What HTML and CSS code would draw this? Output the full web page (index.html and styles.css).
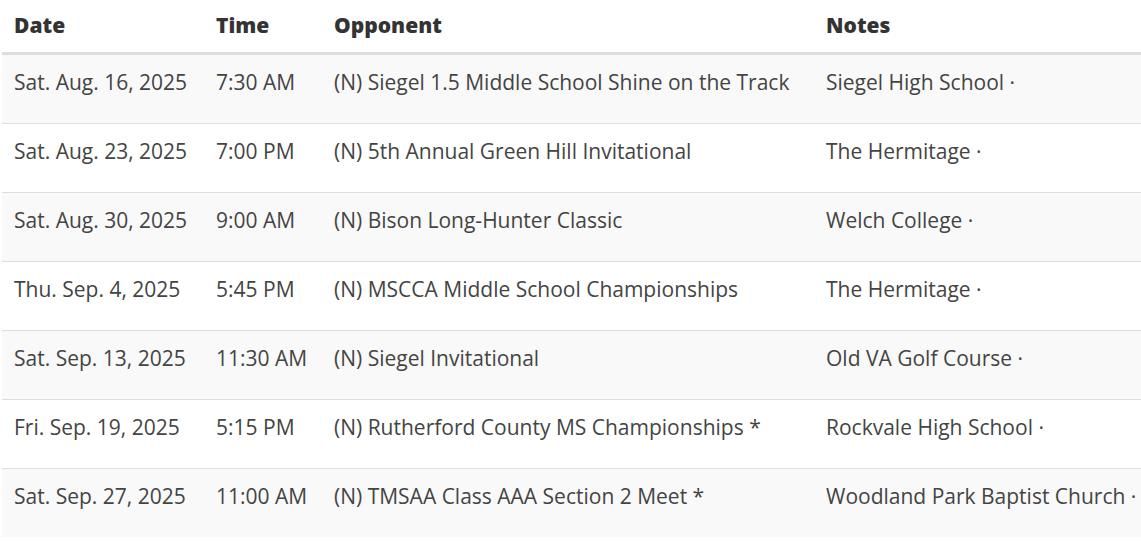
FILE: index.html
```html
<!DOCTYPE html>
<html>
<head>
<meta charset="utf-8">
<link rel="stylesheet" href="styles.css">
</head>
<body>
<table class="schedule">
  <colgroup>
    <col class="c-date"><col class="c-time"><col class="c-opp"><col class="c-notes">
  </colgroup>
  <thead>
    <tr><th>Date</th><th>Time</th><th>Opponent</th><th>Notes</th></tr>
  </thead>
  <tbody>
    <tr><td>Sat. Aug. 16, 2025</td><td>7:30 AM</td><td>(N) Siegel 1.5 Middle School Shine on the Track</td><td>Siegel High School ·</td></tr>
    <tr><td>Sat. Aug. 23, 2025</td><td>7:00 PM</td><td>(N) 5th Annual Green Hill Invitational</td><td>The Hermitage ·</td></tr>
    <tr><td>Sat. Aug. 30, 2025</td><td>9:00 AM</td><td>(N) Bison Long-Hunter Classic</td><td>Welch College ·</td></tr>
    <tr><td>Thu. Sep. 4, 2025</td><td>5:45 PM</td><td>(N) MSCCA Middle School Championships</td><td>The Hermitage ·</td></tr>
    <tr><td>Sat. Sep. 13, 2025</td><td>11:30 AM</td><td>(N) Siegel Invitational</td><td>Old VA Golf Course ·</td></tr>
    <tr><td>Fri. Sep. 19, 2025</td><td>5:15 PM</td><td>(N) Rutherford County MS Championships *</td><td>Rockvale High School ·</td></tr>
    <tr><td>Sat. Sep. 27, 2025</td><td>11:00 AM</td><td>(N) TMSAA Class AAA Section 2 Meet *</td><td>Woodland Park Baptist Church ·</td></tr>
  </tbody>
</table>
</body>
</html>
```
FILE: styles.css
```css
html, body {
  margin: 0;
  padding: 0;
  overflow: hidden;
  background: #fff;
}
body {
  padding-left: 2px;
  font-family: "Open Sans", "DejaVu Sans", sans-serif;
  font-size: 21px;
  color: #444;
}
.schedule {
  border-collapse: collapse;
  table-layout: fixed;
  width: 1150px;
}
.c-date { width: 202px; }
.c-time { width: 118px; }
.c-opp { width: 492px; }
.c-notes { width: 338px; }
.schedule th {
  text-align: left;
  font-weight: 800;
  color: #333;
  line-height: 28px;
  padding: 11px 12px 13px;
  border-bottom: 3px solid #ddd;
  white-space: nowrap;
}
.schedule td {
  line-height: 28px;
  padding: 13px 12px 27px;
  vertical-align: top;
  border-top: 1px solid #ddd;
  white-space: nowrap;
}
.schedule tbody tr:first-child td {
  border-top: none;
}
.schedule tbody tr:nth-child(odd) td {
  background: #f9f9f9;
}
```
